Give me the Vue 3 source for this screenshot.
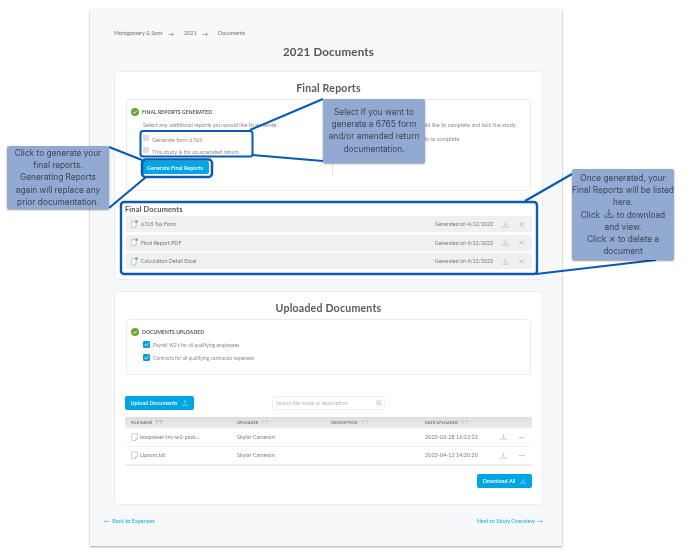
<script setup>
const finals = ['6765 Tax Form', 'Final Report PDF', 'Calculation Detail Excel']
const uploads = [
  { name: 'boxpower-inc-w2-pack...', by: 'Skylar Cameron', date: '2023-03-28 16:12:22' },
  { name: 'Lipsum.txt', by: 'Skylar Cameron', date: '2023-04-12 14:20:20' }
]
const columns = [
  { label: 'FILE NAME', active: true },
  { label: 'UPLOADER', active: false },
  { label: 'DESCRIPTION', active: false },
  { label: 'DATE UPLOADED', active: false }
]
const confirmed = ["Payroll W2's for all qualifying employees", 'Contracts for all qualifying contractor expenses']
</script>

<template>
  <div class="stage">
    <main class="panel">
      <nav class="crumbs">
        <span>Montgomery &amp; Sons</span><span class="arrow">→</span>
        <span>2021</span><span class="arrow">→</span>
        <span>Documents</span>
      </nav>
      <h1>2021 Documents</h1>

      <section class="card card-final">
        <h2>Final Reports</h2>
        <div class="box box-final">
          <div class="half">
            <div class="status">
              <svg class="tick" viewBox="0 0 12 12"><circle cx="6" cy="6" r="6" fill="#6aa82d" /><path d="M3.3 6.2 5.2 8l3.5-3.8" fill="none" stroke="#fff" stroke-width="1.3" /></svg>
              <span>FINAL REPORTS GENERATED</span>
            </div>
            <p class="hint">Select any additional reports you would like to generate.</p>
            <label class="opt"><i class="empty"></i>Generate form 6765</label>
            <label class="opt"><i class="empty"></i>This study is for an amended return.</label>
            <button class="btn btn-gen">Generate Final Reports</button>
          </div>
          <div class="half half-right">
            <p class="hint">Select the checkbox if you would like to complete and lock the study</p>
            <label class="opt">Mark study as complete</label>
          </div>
        </div>
        <h3>Final Documents</h3>
        <div class="docs">
          <div v-for="doc in finals" :key="doc" class="doc">
            <svg class="file" viewBox="0 0 10 12"><path d="M1 1.5h6.5v7L5.5 11H1z" fill="#fff" stroke="#9a9a9a" stroke-width=".7" /><path d="M5.5 11V8.5h2" fill="none" stroke="#9a9a9a" stroke-width=".6" /><circle cx="7.8" cy="2" r="1.9" fill="#6fbf3b" /></svg>
            <span class="doc-name">{{ doc }}</span>
            <span class="doc-date">Generated on 4/12/2023</span>
            <svg class="act dl" viewBox="0 0 10 10"><path d="M5 1v5.5M3 4.8l2 2 2-2M1 7v2h8V7" fill="none" stroke="#a3a3a3" stroke-width=".7" /></svg>
            <svg class="act x" viewBox="0 0 10 10"><path d="M2 2l6 6M8 2l-6 6" stroke="#8f8f8f" stroke-width=".8" /></svg>
          </div>
        </div>
      </section>

      <section class="card card-up">
        <h2>Uploaded Documents</h2>
        <div class="box box-up">
          <div class="status">
            <svg class="tick" viewBox="0 0 12 12"><circle cx="6" cy="6" r="6" fill="#6aa82d" /><path d="M3.3 6.2 5.2 8l3.5-3.8" fill="none" stroke="#fff" stroke-width="1.3" /></svg>
            <span>DOCUMENTS UPLOADED</span>
          </div>
          <label v-for="item in confirmed" :key="item" class="check">
            <svg class="checked" viewBox="0 0 8 8"><rect width="8" height="8" rx="1.4" fill="#0d9ddb" /><path d="M1.8 4.1 3.4 5.6l2.9-3.1" fill="none" stroke="#fff" stroke-width="1" /></svg>
            {{ item }}
          </label>
        </div>

        <div class="tools">
          <button class="btn btn-up">Upload Documents
            <svg viewBox="0 0 10 10"><path d="M5 6.5V1M3 3l2-2 2 2M1 7v2h8V7" fill="none" stroke="#fff" stroke-width=".7" /></svg>
          </button>
          <div class="search">
            <span>Search file name or description</span>
            <svg viewBox="0 0 10 10"><circle cx="4.2" cy="4.2" r="3" fill="none" stroke="#8c8c8c" stroke-width=".9" /><path d="M6.4 6.4 9 9" stroke="#8c8c8c" stroke-width=".9" /></svg>
          </div>
        </div>

        <div class="table">
          <div class="thead trow">
            <span v-for="c in columns" :key="c.label" class="th">{{ c.label }}
              <svg viewBox="0 0 12 6" :class="{ on: c.active }"><path d="M2.5 6V.6M1 2l1.5-1.5L4 2M6 .8h5M7 2.6h3.4M8 4.4h1.4" fill="none" stroke="currentColor" stroke-width=".7" /></svg>
            </span>
          </div>
          <div v-for="row in uploads" :key="row.name" class="trow tbody">
            <span class="fname">
              <svg viewBox="0 0 10 12"><path d="M1 1h8v7.2L6.4 11H1z" fill="#fff" stroke="#9a9a9a" stroke-width=".7" /><path d="M6.4 11V8.2H9" fill="none" stroke="#9a9a9a" stroke-width=".6" /></svg>
              {{ row.name }}
            </span>
            <span>{{ row.by }}</span>
            <span></span>
            <span class="date">
              {{ row.date }}
              <svg class="act row-dl" viewBox="0 0 10 10"><path d="M5 1v5.5M3 4.8l2 2 2-2M1 7v2h8V7" fill="none" stroke="#a3a3a3" stroke-width=".7" /></svg>
              <span class="dots">···</span>
            </span>
          </div>
        </div>
        <div class="all">
          <button class="btn btn-all">Download All
            <svg viewBox="0 0 10 10"><path d="M5 1v5.5M3 4.8l2 2 2-2M1 7v2h8V7" fill="none" stroke="#fff" stroke-width=".7" /></svg>
          </button>
        </div>
      </section>

      <footer class="foot">
        <a>← &nbsp;Back to Expenses</a>
        <a>Next to Study Overview &nbsp;→</a>
      </footer>
    </main>

    <!-- Annotation layer drawn over the screenshot -->
    <svg class="lines" viewBox="0 0 688 551" width="688" height="551">
      <g fill="none" stroke="#0a5ab4" stroke-width="2.2">
        <path d="M109 147 142 160M109 208 146 177M323 99 250 130M323 161 252 155M572 174 525 201M656 260 536 274" />
        <rect x="140.5" y="131" width="112" height="25.5" rx="2.5" stroke-width="2" />
        <rect x="142" y="159.5" width="70" height="17.5" rx="3.5" stroke-width="2.5" />
        <rect x="121" y="202" width="416" height="72" rx="3" stroke-width="2.4" />
      </g>
    </svg>

    <aside class="note note-left">Click to generate your<br />final reports.<br />Generating Reports<br />again will replace any<br />prior documentation.</aside>
    <aside class="note note-mid">Select if you want to<br />generate a 6765 form<br />and/or amended return<br />documentation.</aside>
    <aside class="note note-right">
      Once generated, your<br />Final Reports will be listed<br />here.<br />
      Click
      <svg class="inline-dl" viewBox="0 0 12 11"><path d="M6 .5v7M3.6 5.4 6 7.8l2.4-2.4M1 7.5v2.6h10V7.5" fill="none" stroke="#3c4656" stroke-width="1" /></svg>
      to download<br />and view.<br />
      Click ✕ to delete a<br />document
    </aside>
  </div>
</template>

<style>
html, body { margin: 0; background: #fff; }
</style>

<style scoped>
* { box-sizing: border-box; }
.stage {
  position: relative;
  width: 688px;
  height: 551px;
  overflow: hidden;
  background: #fff;
  font-family: "Lato", "Open Sans", sans-serif;
  color: #6b6b6b;
  filter: blur(0.35px);
}
.panel {
  width: 472px;
  height: 536px;
  margin: 10px 0 0 90px;
  padding: 20px 19px 0 24px;
  background: #f7f8fa;
  box-shadow: 0 1px 2px #00000055, 0 0 1px #0000002e;
  display: flex;
  flex-direction: column;
}
.crumbs { display: flex; height: 7px; line-height: 7px; font-size: 5.4px; color: #707070; }
.arrow { font-size: 6px; margin: 0 10px 0 5.5px; }
h1 { margin: 4px 0 0; text-align: center; font-size: 11.5px; line-height: 22px; height: 22px; font-weight: 700; color: #555; letter-spacing: .2px; }
.card {
  background: #fff;
  border: 1px solid #ececee;
  border-radius: 4px;
  display: flex;
  flex-direction: column;
}
.card-final { height: 209px; margin-top: 8px; }
.card-up { height: 214px; margin-top: 11px; }
h2 { margin: 10px 0 0; text-align: center; font-size: 10.6px; line-height: 12px; font-weight: 700; color: #5b5b5b; letter-spacing: .2px; }
.box { margin: 5px 11px 0; border: 1px solid #ececee; border-radius: 4px; }
.box-final { height: 92px; display: flex; padding: 5px 0 14px; }
.half { width: 206px; padding: 3px 0 0 4px; border-right: 1px solid #e4e4e4; }
.half-right { border: 0; width: 195px; padding: 17px 0 0 0; }
.half-right .hint { margin: 0 0 0 18px; white-space: nowrap; color: #8a8a8a; }
.half-right .opt { padding-left: 68px; margin: 3px 0 0; }
.status { display: flex; align-items: center; gap: 3px; font-size: 5px; line-height: 8px; font-weight: 700; color: #555; letter-spacing: .1px; }
.tick { width: 8px; height: 8px; flex: none; }
.hint { margin: 6px 0 4px 12px; font-size: 5.5px; line-height: 7px; color: #888; white-space: nowrap; }
.opt { display: flex; align-items: center; gap: 3px; height: 12px; margin-left: 12px; font-size: 5.6px; color: #8a8a8a; white-space: nowrap; }
.empty { width: 6px; height: 6px; background: #dcdcdc; border-radius: 1px; margin-top: -3px; }
.btn { border: 0; border-radius: 2px; background: #00a6e3; color: #fff; font: 600 5.5px "Lato", sans-serif; display: flex; align-items: center; justify-content: center; gap: 5px; padding: 0; }
.btn svg { width: 6px; height: 6px; }
.btn-gen { width: 68px; height: 13px; margin: 4px 0 0 10px; }
h3 { margin: 14px 0 0 10px; font-size: 7.4px; line-height: 10px; font-weight: 700; color: #555; letter-spacing: .15px; }
.docs { display: flex; flex-direction: column; gap: 2.6px; margin: 1px 10px 0 11px; }
.doc { height: 16px; background: #f0f0f0; border-radius: 2px; display: flex; align-items: center; padding: 0 7px 0 5px; font-size: 5.4px; color: #777; }
.file { width: 7px; height: 9px; flex: none; margin-right: 3px; }
.doc-name { flex: 1; }
.doc-date { font-size: 5.2px; margin-right: 9px; color: #777; }
.act { width: 7px; height: 7px; flex: none; }
.x { margin-left: 9px; }
.box-up { height: 56px; padding: 8px 0 0 4px; margin-top: 5px; }
.check { display: flex; align-items: center; gap: 3px; margin: 4px 0 0 12px; height: 9px; font-size: 4.9px; color: #8a8a8a; }
.checked { width: 7px; height: 7px; flex: none; }
.tools { display: flex; align-items: center; margin: 21px 11px 0 10px; }
.btn-up { width: 69px; height: 14px; }
.search { width: 113px; height: 14px; margin-left: 78px; background: #fff; border: 1px solid #f0f0f0; border-radius: 2px; display: flex; align-items: center; justify-content: space-between; padding: 0 2px 0 3px; font-size: 5.3px; color: #b5b5b5; }
.search svg { width: 6px; height: 6px; }
.table { margin: 7px 10px 0; border-radius: 2px; box-shadow: 0 .5px 1px #0000001c; }
.trow { display: grid; grid-template-columns: 106px 94px 94px 1fr; padding-left: 6px; align-items: center; }
.thead { height: 11px; background: linear-gradient(#dedede, #ececec); font-size: 3.9px; font-weight: 700; color: #777; letter-spacing: .1px; border-radius: 2px 2px 0 0; }
.th { display: flex; align-items: center; gap: 3px; color: #777; }
.th svg { width: 8px; height: 4.4px; color: #b5b5b5; }
.th svg.on { color: #1ea6df; }
.tbody { height: 18.6px; font-size: 5.5px; color: #7d7d7d; border-bottom: 1px solid #f1f1f1; }
.fname { display: flex; align-items: center; gap: 2px; }
.fname svg { width: 7px; height: 8.5px; flex: none; }
.date { display: flex; align-items: center; }
.row-dl { margin-left: 22px; }
.dots { margin-left: 12px; font-size: 7px; color: #999; letter-spacing: .2px; }
.all { display: flex; justify-content: flex-end; margin: 9px 10px 0 0; }
.btn-all { width: 55px; height: 14px; }
.foot { display: flex; justify-content: space-between; margin: 12px 0 0 -10px; font-size: 5.5px; line-height: 8px; color: #1ea6df; }
.lines { position: absolute; left: 0; top: 0; pointer-events: none; }
.note {
  position: absolute;
  background: #92a9d1;
  border-radius: 2px;
  box-shadow: 0 1px 2px #00000066;
  font-family: "Inter", "Open Sans", sans-serif;
  font-size: 8.3px;
  line-height: 12.2px;
  color: #3c4656;
  text-align: center;
  padding: 1px 0;
  white-space: nowrap;
}
.note-left { left: 7px; top: 146px; width: 102px; height: 63px; }
.note-mid { left: 323px; top: 99px; width: 102px; height: 64px; padding-top: 7px; }
.note-right { left: 572px; top: 169px; width: 102px; height: 91px; padding-top: 3px; }
.inline-dl { width: 10px; height: 9px; vertical-align: 0; margin: 0 1px; }
</style>
